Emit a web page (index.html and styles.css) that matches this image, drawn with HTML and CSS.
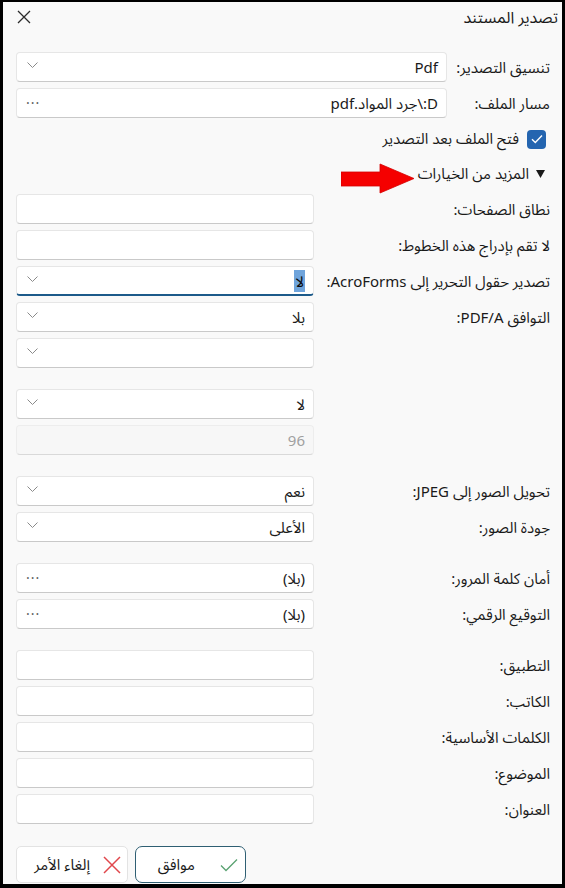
FILE: index.html
```html
<!DOCTYPE html>
<html lang="ar" dir="rtl">
<head>
<meta charset="utf-8">
<title>تصدير المستند</title>
<link rel="stylesheet" href="styles.css">
</head>
<body>
<div class="frame">
  <header class="titlebar">
    <span class="title">تصدير المستند</span>
    <span class="close" aria-label="إغلاق">
      <svg width="14" height="14" viewBox="0 0 14 14"><path d="M1 1 L13 13 M13 1 L1 13" stroke="#2b2b2b" stroke-width="1.3" fill="none"/></svg>
    </span>
  </header>

  <div class="content">
    <div class="grid grid-top">
      <div class="label">تنسيق التصدير:</div>
      <div class="box select"><span class="val">Pdf</span><span class="chev"><svg width="11" height="6" viewBox="0 0 11 6"><path d="M0.5 0.5 L5.5 5.5 L10.5 0.5" stroke="#8a8a8a" stroke-width="1" fill="none"/></svg></span></div>
      <div class="label">مسار الملف:</div>
      <div class="box"><span class="val">D:\جرد المواد.pdf</span><span class="dots">···</span></div>
    </div>

    <div class="checkrow">
      <span class="checkbox"><svg width="12" height="10" viewBox="0 0 12 10"><path d="M1 5.2 L4.3 8.5 L11 1.5" stroke="#fff" stroke-width="1.4" fill="none"/></svg></span>
      <span class="checktext">فتح الملف بعد التصدير</span>
    </div>

    <div class="morerow">
      <span class="tri"><svg width="9" height="8" viewBox="0 0 9 8"><path d="M0 0 H9 L4.5 8 Z" fill="#1a1a1a"/></svg></span>
      <span class="moretext">المزيد من الخيارات</span>
      <span class="arrow"><svg width="74" height="31" viewBox="0 0 74 31"><path d="M0 9 H39 V1 L73 15.5 L39 30 V23 H0 Z" fill="#f50000" stroke="#d40000" stroke-width="0.8"/></svg></span>
    </div>

    <div class="groups">
      <div class="grid grid-low">
        <div class="label">نطاق الصفحات:</div>
        <div class="box"></div>
        <div class="label">لا تقم بإدراج هذه الخطوط:</div>
        <div class="box"></div>
        <div class="label">تصدير حقول التحرير إلى AcroForms:</div>
        <div class="box select focused"><span class="val"><span class="sel">لا</span></span><span class="chev"><svg width="11" height="6" viewBox="0 0 11 6"><path d="M0.5 0.5 L5.5 5.5 L10.5 0.5" stroke="#8a8a8a" stroke-width="1" fill="none"/></svg></span></div>
        <div class="label">التوافق PDF/A:</div>
        <div class="box select"><span class="val">بلا</span><span class="chev"><svg width="11" height="6" viewBox="0 0 11 6"><path d="M0.5 0.5 L5.5 5.5 L10.5 0.5" stroke="#8a8a8a" stroke-width="1" fill="none"/></svg></span></div>
        <div class="label"></div>
        <div class="box select"><span class="val"></span><span class="chev"><svg width="11" height="6" viewBox="0 0 11 6"><path d="M0.5 0.5 L5.5 5.5 L10.5 0.5" stroke="#8a8a8a" stroke-width="1" fill="none"/></svg></span></div>
      </div>

      <div class="grid grid-low">
        <div class="label"></div>
        <div class="box select"><span class="val">لا</span><span class="chev"><svg width="11" height="6" viewBox="0 0 11 6"><path d="M0.5 0.5 L5.5 5.5 L10.5 0.5" stroke="#8a8a8a" stroke-width="1" fill="none"/></svg></span></div>
        <div class="label"></div>
        <div class="box disabled"><span class="val">96</span></div>
      </div>

      <div class="grid grid-low">
        <div class="label">تحويل الصور إلى JPEG:</div>
        <div class="box select"><span class="val">نعم</span><span class="chev"><svg width="11" height="6" viewBox="0 0 11 6"><path d="M0.5 0.5 L5.5 5.5 L10.5 0.5" stroke="#8a8a8a" stroke-width="1" fill="none"/></svg></span></div>
        <div class="label">جودة الصور:</div>
        <div class="box select"><span class="val">الأعلى</span><span class="chev"><svg width="11" height="6" viewBox="0 0 11 6"><path d="M0.5 0.5 L5.5 5.5 L10.5 0.5" stroke="#8a8a8a" stroke-width="1" fill="none"/></svg></span></div>
      </div>

      <div class="grid grid-low">
        <div class="label">أمان كلمة المرور:</div>
        <div class="box"><span class="val">(بلا)</span><span class="dots">···</span></div>
        <div class="label">التوقيع الرقمي:</div>
        <div class="box"><span class="val">(بلا)</span><span class="dots">···</span></div>
      </div>

      <div class="grid grid-low">
        <div class="label">التطبيق:</div>
        <div class="box"></div>
        <div class="label">الكاتب:</div>
        <div class="box"></div>
        <div class="label">الكلمات الأساسية:</div>
        <div class="box"></div>
        <div class="label">الموضوع:</div>
        <div class="box"></div>
        <div class="label">العنوان:</div>
        <div class="box"></div>
      </div>
    </div>

    <div class="buttons">
      <button class="btn btn-ok">
        <span class="btn-icon"><svg width="18" height="14" viewBox="0 0 18 14"><path d="M1 7.5 L6 12.5 L17 1.5" stroke="#5aa272" stroke-width="1.3" fill="none"/></svg></span>
        <span class="btn-text">موافق</span>
      </button>
      <button class="btn btn-cancel">
        <span class="btn-icon"><svg width="18" height="18" viewBox="0 0 18 18"><path d="M1 1 L17 17 M17 1 L1 17" stroke="#e0474c" stroke-width="1.5" fill="none"/></svg></span>
        <span class="btn-text">إلغاء الأمر</span>
      </button>
    </div>
  </div>
</div>
</body>
</html>
```

FILE: styles.css
```css
* { box-sizing: border-box; }

html, body {
  margin: 0;
  padding: 0;
  background: #000;
}

body {
  font-family: "Noto Sans", "Noto Sans Arabic", "DejaVu Sans", sans-serif;
  font-size: 15px;
  color: #1a1a1a;
  direction: rtl;
}

.frame {
  width: 565px;
  height: 888px;
  border-style: solid;
  border-color: #000;
  border-width: 2px 3px 4px 3px;
  background: #f9f9f9;
  display: flex;
  flex-direction: column;
}

.titlebar {
  height: 50px;
  display: flex;
  justify-content: space-between;
  align-items: flex-start;
  padding: 4px 4px 0 14px;
}

.title {
  font-size: 16px;
  line-height: 22px;
  color: #1a1a1a;
}

.close {
  display: flex;
  margin-top: 4px;
}

.content {
  padding: 0 12px 0 13px;
  display: flex;
  flex-direction: column;
}

.grid {
  display: grid;
  row-gap: 6px;
}

.grid-top {
  grid-template-columns: 98px 1fr;
  column-gap: 5px;
}

.grid-low {
  grid-template-columns: 230px 1fr;
  column-gap: 6px;
}

.label {
  height: 30px;
  line-height: 30px;
  white-space: nowrap;
  color: #1a1a1a;
}

.box {
  height: 30px;
  background: #fff;
  border: 1px solid #e6e6e6;
  border-bottom-color: #c9c9c9;
  border-radius: 4px;
  display: flex;
  align-items: center;
  justify-content: space-between;
  padding: 0 8px 0 8px;
}

.val {
  line-height: 20px;
  white-space: nowrap;
  color: #1a1a1a;
}

.chev {
  display: flex;
  margin-bottom: 4px;
  margin-left: 2px;
}

.dots {
  color: #5e5e5e;
  font-size: 14px;
  line-height: 20px;
  letter-spacing: 1px;
  margin-left: 1px;
}

.focused {
  border-bottom: 2px solid #1c5a8a;
}

.sel {
  background: #6fa4db;
  color: #0a0a0a;
  padding: 1px 1px;
}

.disabled {
  background: #f7f7f7;
  border-color: #ededed;
  border-bottom-color: #d9d9d9;
}

.disabled .val {
  color: #a0a0a0;
}

.checkrow {
  margin-top: 6px;
  height: 30px;
  display: flex;
  align-items: center;
  gap: 8px;
  padding-right: 4px;
}

.checkbox {
  width: 19px;
  height: 19px;
  border-radius: 4px;
  background: #2465b0;
  display: flex;
  align-items: center;
  justify-content: center;
}

.morerow {
  margin-top: 6px;
  height: 28px;
  display: flex;
  align-items: center;
  padding-right: 5px;
}

.tri {
  display: flex;
  margin-left: 7px;
}

.arrow {
  display: flex;
  margin-right: 3px;
  margin-top: 8px;
}

.groups {
  margin-top: 6px;
  display: flex;
  flex-direction: column;
  gap: 21px;
}

.buttons {
  margin-top: 22px;
  display: flex;
  justify-content: flex-end;
  gap: 7px;
}

.btn {
  font-family: inherit;
  font-size: 15px;
  height: 37px;
  width: 112px;
  background: #fff;
  border: 1px solid #e3e3e3;
  border-radius: 5px;
  display: flex;
  align-items: center;
  padding: 0 7px 0 10px;
  color: #1a1a1a;
  direction: rtl;
}

.btn-ok {
  width: 111px;
  border: 1px solid #2f5f73;
  border-radius: 7px;
  gap: 25px;
  padding-right: 7px;
}

.btn-cancel {
  gap: 13px;
  padding-right: 6px;
}

.btn-icon {
  display: flex;
}
```
